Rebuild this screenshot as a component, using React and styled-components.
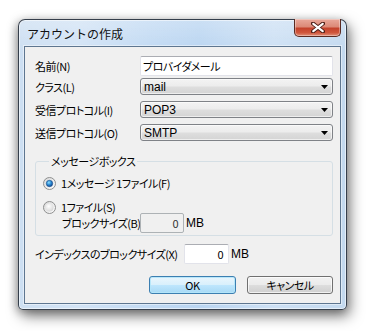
import React from 'react';
import styled, { createGlobalStyle } from 'styled-components';

const Global = createGlobalStyle`
  html, body { margin: 0; padding: 0; background: #ffffff; }
  body {
    font-family: "Noto Sans CJK JP", "Noto Sans", sans-serif;
    font-size: 12px;
    color: #000;
  }
  * { box-sizing: border-box; }
`;

const Page = styled.div`
  width: 368px;
  height: 331px;
  padding: 19px 0 0 18px;
`;

const Window = styled.div`
  width: 329px;
  height: 291px;
  border: 1px solid rgba(38, 46, 58, 0.9);
  border-radius: 7px 7px 5px 5px;
  background:
    linear-gradient(180deg, rgba(255,255,255,0.25) 0%, rgba(255,255,255,0) 30px),
    linear-gradient(90deg, #cddff2 0%, #d2e3f5 18%, #c2daf3 40%, #bad5f1 55%, #cde0f4 78%, #c3d9ef 100%);
  box-shadow: 3px 6px 14px rgba(0, 0, 0, 0.5), -2px 2px 8px rgba(0,0,0,0.25), inset 0 0 0 1px rgba(255, 255, 255, 0.55);
  padding: 0 5px 5px 5px;
  display: flex;
  flex-direction: column;
`;

const TitleBar = styled.div`
  height: 26px;
  display: flex;
  justify-content: space-between;
  align-items: flex-start;
`;

const Title = styled.div`
  padding: 6px 0 0 3px;
  font-size: 12px;
  line-height: 16px;
  color: #111;
`;

const CloseButton = styled.div`
  width: 47px;
  height: 18px;
  margin-top: -1px;
  border: 1px solid #5a2a22;
  border-top: none;
  border-radius: 0 0 5px 5px;
  background: linear-gradient(180deg, #e9a99b 0%, #dc8a78 45%, #c4432c 55%, #d0563c 80%, #e0907a 100%);
  box-shadow: inset 0 0 0 1px rgba(255, 255, 255, 0.35);
  display: flex;
  align-items: center;
  justify-content: center;
`;

const Client = styled.div`
  flex: 1;
  border: 1px solid #5e7690;
  box-shadow: 0 0 0 1px rgba(255, 255, 255, 0.45);
  background: #f0f0f0;
  padding: 9px 6px 8px 10px;
  display: flex;
  flex-direction: column;
`;

const Row = styled.div`
  display: grid;
  grid-template-columns: 105px 193px;
  align-items: center;
  height: ${p => p.$h}px;
  margin-top: ${p => p.$mt || 0}px;
`;

const textStyle = `
  font-size: 11px;
  line-height: 14px;
  font-feature-settings: "palt";
  letter-spacing: -0.5px;
`;

const Label = styled.span`
  ${textStyle}
  white-space: nowrap;
`;

const TextBox = styled.div`
  ${textStyle}
  height: 20px;
  flex-shrink: 0;
  background: ${p => (p.$disabled ? '#f0f0f0' : '#ffffff')};
  border: 1px solid ${p => (p.$disabled ? '#adb2b5' : '#e2e3ea')};
  border-top-color: ${p => (p.$disabled ? '#adb2b5' : '#abadb3')};
  border-radius: 2px;
  display: flex;
  align-items: center;
  justify-content: ${p => (p.$right ? 'flex-end' : 'flex-start')};
  padding: 0 ${p => (p.$right ? '5px' : '0')} 0 ${p => (p.$right ? '0' : '2px')};
  width: ${p => (p.$w ? `${p.$w}px` : 'auto')};
  color: ${p => (p.$disabled ? '#333' : '#000')};
`;

const Combo = styled.div`
  height: 17px;
  border: 1px solid #7f8287;
  border-radius: 3px;
  background: linear-gradient(180deg, #f3f3f3 0%, #ececec 48%, #dedede 52%, #d4d4d4 100%);
  box-shadow: inset 0 0 0 1px rgba(255, 255, 255, 0.6);
  display: flex;
  align-items: center;
  justify-content: space-between;
  padding: 0 4px 0 3px;
  font-family: "Liberation Sans", "Noto Sans", sans-serif;
  font-size: 12px;
  line-height: 14px;
`;

const GroupBox = styled.fieldset`
  width: 298px;
  margin: 12px 0 0 0;
  padding: 0 0 2px 7px;
  border: 1px solid #d5dfe5;
  border-radius: 3px;
  min-width: 0;
  display: flex;
  flex-direction: column;
`;

const Legend = styled.legend`
  ${textStyle}
  line-height: 16px;
  margin-left: 6px;
  padding: 0 2px;
`;

const RadioRow = styled.div`
  display: flex;
  align-items: center;
  gap: 5px;
  height: 12px;
  margin-top: ${p => p.$mt}px;
`;

const SizeRow = styled.div`
  display: flex;
  align-items: center;
  height: 20px;
  padding-left: 19px;
`;

const SizeLabel = styled(Label)`
  width: ${p => p.$w}px;
  flex-shrink: 0;
`;

const Unit = styled.span`
  margin-left: 2px;
  font-family: "Liberation Sans", "Noto Sans", sans-serif;
  font-size: 12px;
`;

const IndexRow = styled.div`
  display: flex;
  align-items: center;
  height: 20px;
  margin-top: 8px;
`;

const ButtonRow = styled.div`
  display: flex;
  justify-content: flex-end;
  gap: 11px;
  margin-top: 12px;
  padding-right: 1px;
`;

const Button = styled.div`
  ${textStyle}
  width: ${p => p.$w}px;
  height: 18px;
  border: 1px solid ${p => (p.$default ? '#3c7fb1' : '#707070')};
  border-radius: 3px;
  background: ${p =>
    p.$default
      ? 'linear-gradient(180deg, #eaf6fd 0%, #d9f0fc 48%, #bee6fd 52%, #a7d9f5 100%)'
      : 'linear-gradient(180deg, #f2f2f2 0%, #ebebeb 48%, #dddddd 52%, #cfcfcf 100%)'};
  box-shadow: inset 0 0 0 1px ${p => (p.$default ? 'rgba(180, 230, 250, 0.9)' : 'rgba(255,255,255,0.7)')};
  display: flex;
  align-items: center;
  justify-content: center;
`;

const Arrow = () => (
  <svg width="7" height="4" viewBox="0 0 7 4">
    <path d="M0 0 H7 L3.5 4 Z" fill="#000" />
  </svg>
);

const Radio = ({ checked }) => (
  <svg width="13" height="13" viewBox="0 0 13 13">
    <defs>
      <radialGradient id={checked ? 'rOn' : 'rOff'} cx="0.4" cy="0.35" r="0.7">
        {checked ? (
          <>
            <stop offset="0" stopColor="#8fe0ff" />
            <stop offset="0.5" stopColor="#2a8ad4" />
            <stop offset="1" stopColor="#0f3f88" />
          </>
        ) : (
          <>
            <stop offset="0" stopColor="#ffffff" />
            <stop offset="1" stopColor="#d6d6d6" />
          </>
        )}
      </radialGradient>
      <linearGradient id="rBg" x1="0" y1="0" x2="1" y2="1">
        <stop offset="0" stopColor="#d6d6d6" />
        <stop offset="1" stopColor="#ffffff" />
      </linearGradient>
    </defs>
    <circle cx="6.5" cy="6.5" r="6" fill="url(#rBg)" stroke="#8e8f8f" strokeWidth="1" />
    <circle cx="6.5" cy="6.5" r={checked ? 3.2 : 4} fill={`url(#${checked ? 'rOn' : 'rOff'})`} stroke={checked ? '#1a4f8a' : 'none'} strokeWidth="0.6" />
  </svg>
);

const CloseX = () => (
  <svg width="14" height="11" viewBox="0 0 14 11">
    <path d="M2 1.5 L12 9.5 M12 1.5 L2 9.5" stroke="#4a1c14" strokeWidth="4" strokeLinecap="round" />
    <path d="M2.3 1.8 L11.7 9.2 M11.7 1.8 L2.3 9.2" stroke="#ffffff" strokeWidth="2.2" strokeLinecap="round" />
  </svg>
);

export default function App() {
  return (
    <Page>
      <Global />
      <Window>
        <TitleBar>
          <Title>アカウントの作成</Title>
          <CloseButton>
            <CloseX />
          </CloseButton>
        </TitleBar>
        <Client>
          <Row $h={20}>
            <Label>名前(N)</Label>
            <TextBox>プロバイダメール</TextBox>
          </Row>
          <Row $h={17} $mt={2}>
            <Label>クラス(L)</Label>
            <Combo>
              <span>mail</span>
              <Arrow />
            </Combo>
          </Row>
          <Row $h={17} $mt={6}>
            <Label>受信プロトコル(I)</Label>
            <Combo>
              <span>POP3</span>
              <Arrow />
            </Combo>
          </Row>
          <Row $h={17} $mt={6}>
            <Label>送信プロトコル(O)</Label>
            <Combo>
              <span>SMTP</span>
              <Arrow />
            </Combo>
          </Row>
          <GroupBox>
            <Legend>メッセージボックス</Legend>
            <RadioRow $mt={8}>
              <Radio checked />
              <Label>1メッセージ 1ファイル(F)</Label>
            </RadioRow>
            <RadioRow $mt={12}>
              <Radio />
              <Label>1ファイル(S)</Label>
            </RadioRow>
            <SizeRow>
              <SizeLabel $w={78}>ブロックサイズ(B)</SizeLabel>
              <TextBox $disabled $right $w={44}>0</TextBox>
              <Unit>MB</Unit>
            </SizeRow>
          </GroupBox>
          <IndexRow>
            <SizeLabel $w={149}>インデックスのブロックサイズ(X)</SizeLabel>
            <TextBox $right $w={45}>0</TextBox>
            <Unit>MB</Unit>
          </IndexRow>
          <ButtonRow>
            <Button $default $w={87}>OK</Button>
            <Button $w={86}>キャンセル</Button>
          </ButtonRow>
        </Client>
      </Window>
    </Page>
  );
}
